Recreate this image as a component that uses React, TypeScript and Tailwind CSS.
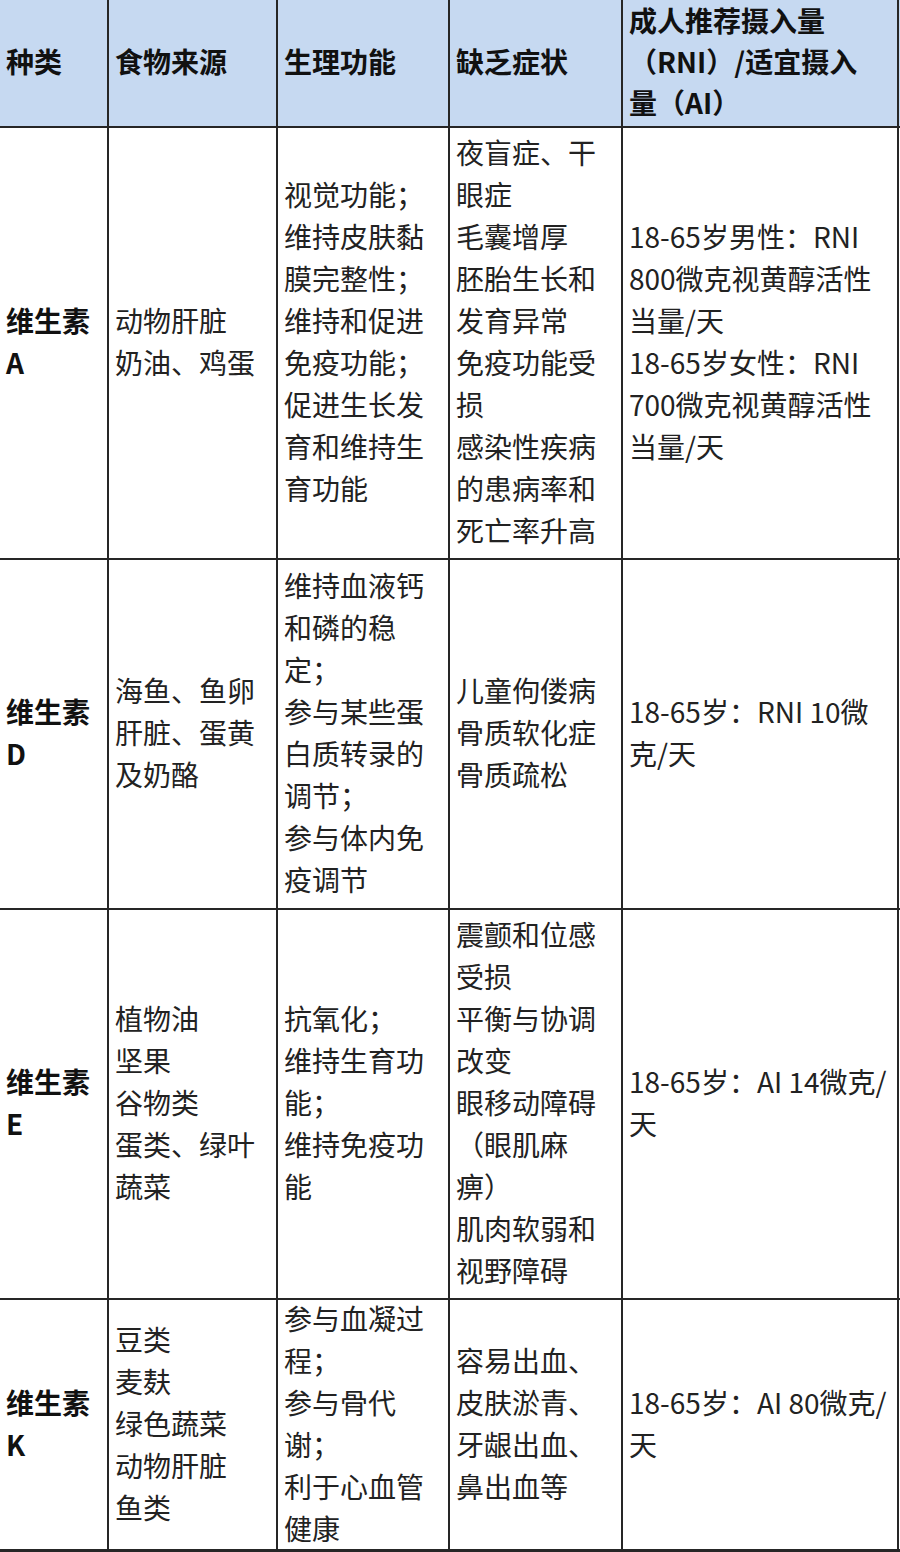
import React from "react";

type Row = {
  h: string;
  cells: string[][];
};

const widths = ["w-[109px]", "w-[169px]", "w-[172px]", "w-[173px]", "w-[276px]"];

const rows: Row[] = [
  {
    h: "h-[432px]",
    cells: [
      ["维生素", "A"],
      ["动物肝脏", "奶油、鸡蛋"],
      ["视觉功能；", "维持皮肤黏", "膜完整性；", "维持和促进", "免疫功能；", "促进生长发", "育和维持生", "育功能"],
      ["夜盲症、干", "眼症", "毛囊增厚", "胚胎生长和", "发育异常", "免疫功能受", "损", "感染性疾病", "的患病率和", "死亡率升高"],
      ["18-65岁男性：RNI", "800微克视黄醇活性", "当量/天", "18-65岁女性：RNI", "700微克视黄醇活性", "当量/天"],
    ],
  },
  {
    h: "h-[350px]",
    cells: [
      ["维生素", "D"],
      ["海鱼、鱼卵", "肝脏、蛋黄", "及奶酪"],
      ["维持血液钙", "和磷的稳", "定；", "参与某些蛋", "白质转录的", "调节；", "参与体内免", "疫调节"],
      ["儿童佝偻病", "骨质软化症", "骨质疏松"],
      ["18-65岁：RNI 10微", "克/天"],
    ],
  },
  {
    h: "h-[390px]",
    cells: [
      ["维生素", "E"],
      ["植物油", "坚果", "谷物类", "蛋类、绿叶", "蔬菜"],
      ["抗氧化；", "维持生育功", "能；", "维持免疫功", "能"],
      ["震颤和位感", "受损", "平衡与协调", "改变", "眼移动障碍", "（眼肌麻", "痹）", "肌肉软弱和", "视野障碍"],
      ["18-65岁：AI 14微克/", "天"],
    ],
  },
  {
    h: "h-[252px]",
    cells: [
      ["维生素", "K"],
      ["豆类", "麦麸", "绿色蔬菜", "动物肝脏", "鱼类"],
      ["参与血凝过", "程；", "参与骨代", "谢；", "利于心血管", "健康"],
      ["容易出血、", "皮肤淤青、", "牙龈出血、", "鼻出血等"],
      ["18-65岁：AI 80微克/", "天"],
    ],
  },
];

const header: string[][] = [
  ["种类"],
  ["食物来源"],
  ["生理功能"],
  ["缺乏症状"],
  ["成人推荐摄入量", "（RNI）/适宜摄入", "量（AI）"],
];

export default function App() {
  return (
    <div
      className="w-[900px] h-[1552px] bg-white overflow-hidden"
      style={{ fontFamily: '"Noto Sans CJK SC", "Noto Sans", sans-serif' }}
    >
      <div className="flex h-[128px] bg-[#c6d9f1] border-b-2 border-[#262626]">
        {header.map((lines, i) => (
          <div
            key={i}
            className={`${widths[i]} shrink-0 flex items-center pl-[6px] pb-[4px] border-r-2 border-[#262626]`}
          >
            <div className="text-[28px] leading-[41px] font-bold text-[#111] whitespace-nowrap">
              {lines.map((l, j) => (
                <div key={j}>{l}</div>
              ))}
            </div>
          </div>
        ))}
      </div>
      {rows.map((row, ri) => (
        <div
          key={ri}
          className={`flex ${row.h} ${ri === rows.length - 1 ? "border-b-[3px]" : "border-b-2"} border-[#262626]`}
        >
          {row.cells.map((lines, ci) => (
            <div
              key={ci}
              className={`${widths[ci]} shrink-0 flex items-center pl-[6px] pb-[4px] border-r-2 border-[#262626]`}
            >
              <div
                className={`text-[28px] leading-[42px] whitespace-nowrap ${
                  ci === 0 ? "font-bold text-[#111]" : "text-[#222]"
                }`}
              >
                {lines.map((l, j) => (
                  <div key={j}>{l}</div>
                ))}
              </div>
            </div>
          ))}
        </div>
      ))}
    </div>
  );
}
